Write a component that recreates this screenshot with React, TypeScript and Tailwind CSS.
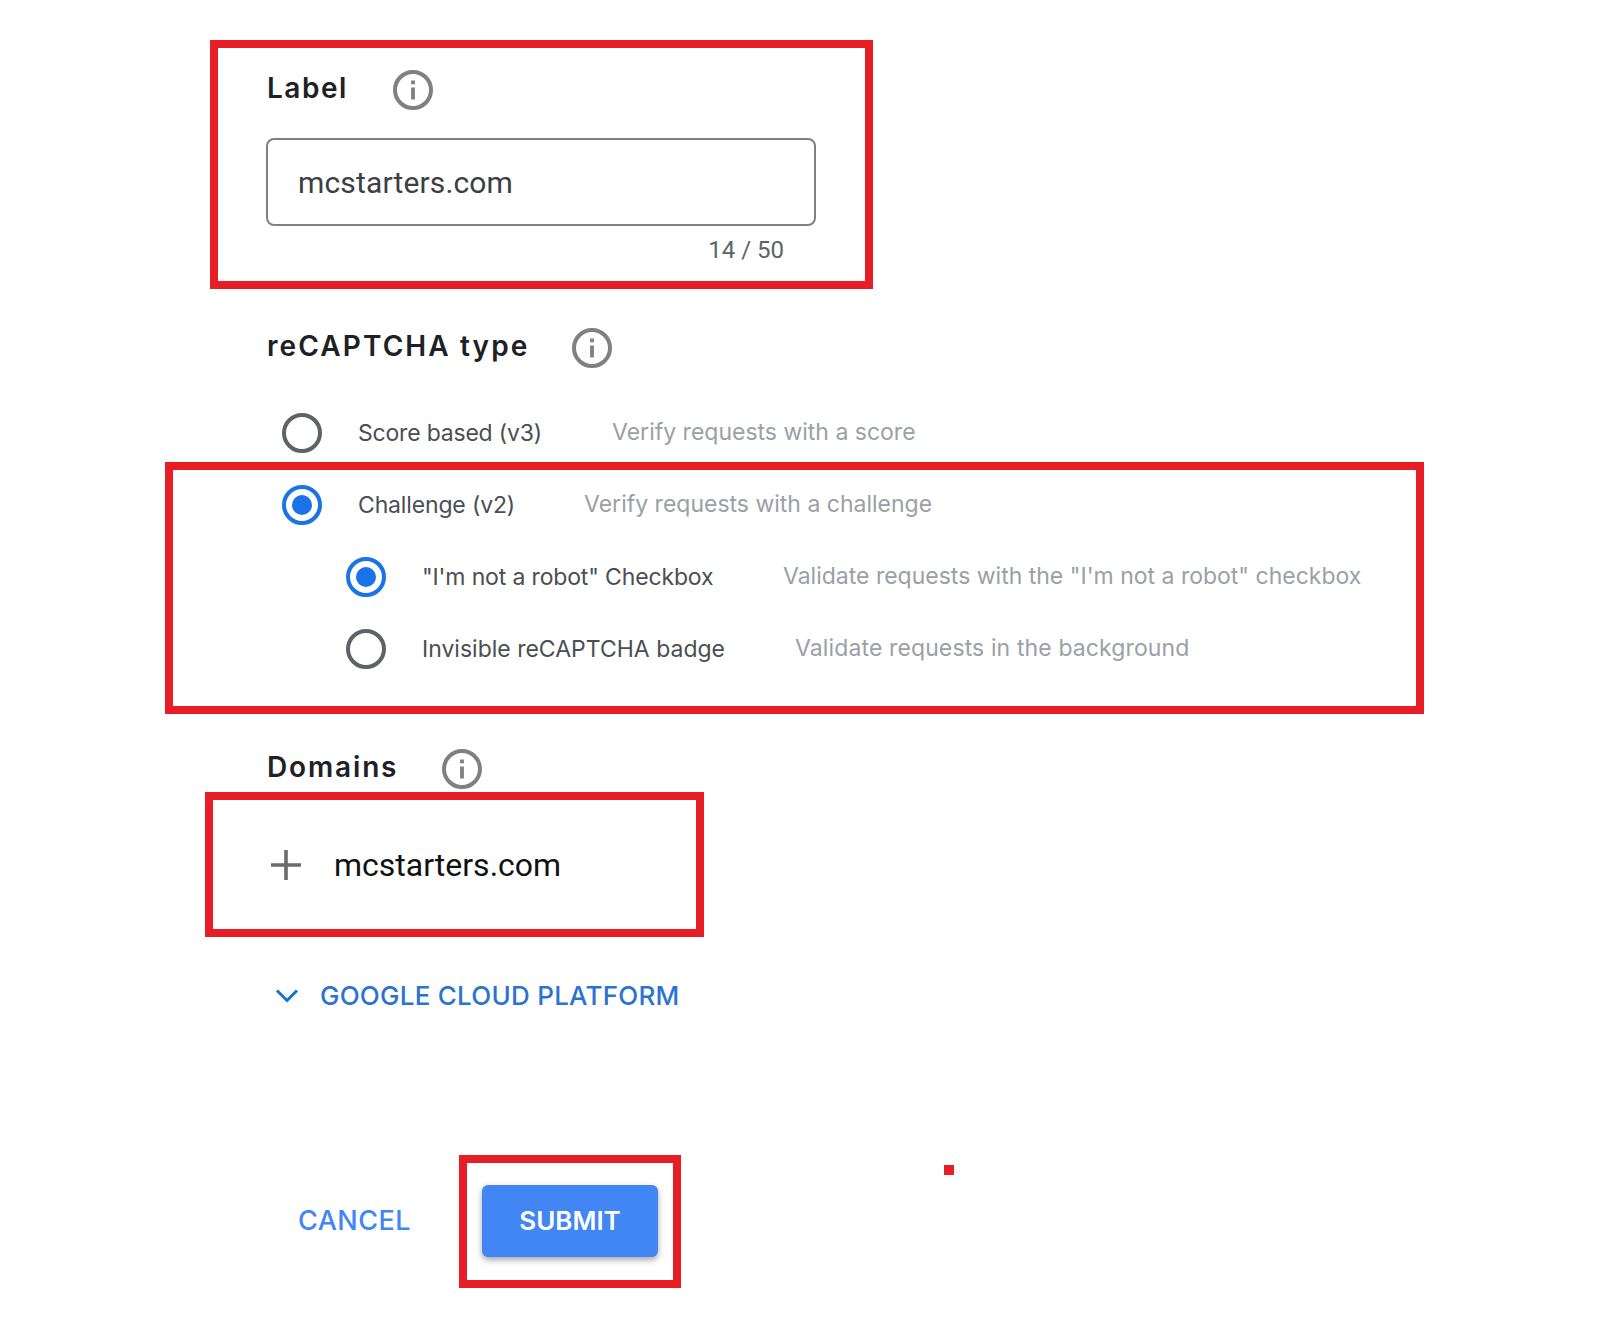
const sans = "font-['Inter','Noto_Sans',sans-serif]"
const roboto = "font-['Roboto','Liberation_Sans',sans-serif]"

function InfoIcon() {
  return (
    <svg width="40" height="40" viewBox="0 0 40 40" className="shrink-0">
      <circle cx="20" cy="20" r="18" fill="none" stroke="#808080" strokeWidth="4" />
      <rect x="18.1" y="17.5" width="3.8" height="12" fill="#808080" />
      <rect x="18.1" y="10.5" width="3.8" height="3.8" fill="#808080" />
    </svg>
  )
}

function Radio({ checked }: { checked?: boolean }) {
  return (
    <div
      className={`w-10 h-10 rounded-full border-4 flex items-center justify-center shrink-0 ${
        checked ? 'border-[#1a73e8]' : 'border-[#5f6368]'
      }`}
    >
      {checked && <div className="w-[20px] h-[20px] rounded-full bg-[#1a73e8]" />}
    </div>
  )
}

function Heading({ title, tracking, gap }: { title: string; tracking: string; gap: string }) {
  return (
    <div className={`flex items-center h-10 ${gap}`}>
      <span className={`${sans} ${tracking} text-[28px] font-semibold text-[#202124] leading-none -mt-1`}>
        {title}
      </span>
      <InfoIcon />
    </div>
  )
}

function RadioRow({
  label,
  hint,
  checked,
  labelWidth,
  labelTracking = '',
  hintTracking = '',
}: {
  label: string
  hint: string
  checked?: boolean
  labelWidth: string
  labelTracking?: string
  hintTracking?: string
}) {
  return (
    <div className="flex items-center h-10">
      <Radio checked={checked} />
      <span className={`${sans} ${labelWidth} ${labelTracking} ml-[36px] text-[23px] text-[#4b4e52] whitespace-nowrap`}>
        {label}
      </span>
      <span className={`${sans} ${hintTracking} mb-[2px] text-[23px] text-[#9aa0a6] whitespace-nowrap`}>{hint}</span>
    </div>
  )
}

function RedBox({ className }: { className: string }) {
  return <div className={`absolute border-8 border-[#e81e26] pointer-events-none ${className}`} />
}

export default function App() {
  return (
    <div className="relative w-[1600px] h-[1328px] bg-white pl-[267px] pt-[70px] overflow-hidden">
      <section className="relative">
        <RedBox className="left-[-57px] right-[727px] top-[-30px] h-[249px]" />
        <Heading title="Label" tracking="tracking-[1.5px]" gap="gap-[45px]" />
        <div className="-ml-px mt-[28px] w-[550px] h-[88px] border-2 border-[#808080] rounded-lg flex items-center pl-[30px]">
          <span className={`${roboto} text-[30px] tracking-[0.15px] text-[#3c4043]`}>mcstarters.com</span>
        </div>
        <div className={`${roboto} w-[517px] mt-[11px] h-[26px] text-right text-[24px] leading-[26px] text-[#5f6368]`}>
          14 / 50
        </div>
      </section>

      <section className="mt-[65px]">
        <Heading title="reCAPTCHA type" tracking="tracking-[2.1px]" gap="gap-[43px]" />
      </section>

      <section className="mt-[45px] relative flex flex-col gap-8">
        <RedBox className="left-[-102px] right-[176px] top-[49px] h-[252px]" />
        <div className="ml-[15px]">
          <RadioRow
            label="Score based (v3)"
            hint="Verify requests with a score"
            labelWidth="w-[254px]"
            labelTracking="tracking-[-0.2px]"
          />
        </div>
        <div className="ml-[15px]">
          <RadioRow
            label="Challenge (v2)"
            hint="Verify requests with a challenge"
            checked
            labelWidth="w-[226px]"
            labelTracking="tracking-[-0.15px]"
          />
        </div>
        <div className="ml-[79px] flex flex-col gap-8">
          <RadioRow
            label={'"I\'m not a robot" Checkbox'}
            hint={'Validate requests with the "I\'m not a robot" checkbox'}
            checked
            labelWidth="w-[361px]"
            labelTracking="tracking-[-0.15px]"
          />
          <RadioRow
            label="Invisible reCAPTCHA badge"
            hint="Validate requests in the background"
            labelWidth="w-[373px]"
            hintTracking="tracking-[0.12px]"
          />
        </div>
      </section>

      <section className="mt-[80px]">
        <Heading title="Domains" tracking="tracking-[1.85px]" gap="gap-[44px]" />
      </section>

      <section className="relative mt-[56px] h-10 flex items-center">
        <RedBox className="left-[-62px] w-[499px] top-[-53px] h-[145px]" />
        <svg width="30" height="30" viewBox="0 0 30 30" className="ml-[4px] shrink-0">
          <path d="M15 0v30M0 15h30" stroke="#6b6b6b" strokeWidth="3.6" fill="none" />
        </svg>
        <span className={`${roboto} ml-[33px] text-[32px] text-[#111]`}>mcstarters.com</span>
      </section>

      <section className="mt-[91px] h-10 flex items-center">
        <svg width="24" height="16" viewBox="0 0 24 16" className="ml-[8px] shrink-0">
          <path d="M2 2.5l10 10 10-10" stroke="#1a6fd0" strokeWidth="3" fill="none" />
        </svg>
        <span className={`${sans} ml-[21px] mb-[2px] text-[26px] tracking-[0.25px] font-medium text-[#2a73d0] whitespace-nowrap`}>
          GOOGLE CLOUD PLATFORM
        </span>
      </section>

      <section className="relative mt-[169px] flex items-center h-[72px]">
        <RedBox className="left-[192px] w-[222px] top-[-30px] h-[133px]" />
        <span className={`${sans} ml-[31px] text-[27px] tracking-[0.5px] font-medium text-[#4285f4] w-[184px]`}>
          CANCEL
        </span>
        <button className={`${sans} w-[176px] h-[72px] pb-[2px] rounded-md bg-[#4285f4] text-white text-[26px] font-semibold shadow-[0_3px_6px_rgba(0,0,0,0.35)]`}>
          SUBMIT
        </button>
      </section>

      <div className="absolute left-[944px] top-[1165px] w-[10px] h-[10px] bg-[#e81e26]" />
    </div>
  )
}
